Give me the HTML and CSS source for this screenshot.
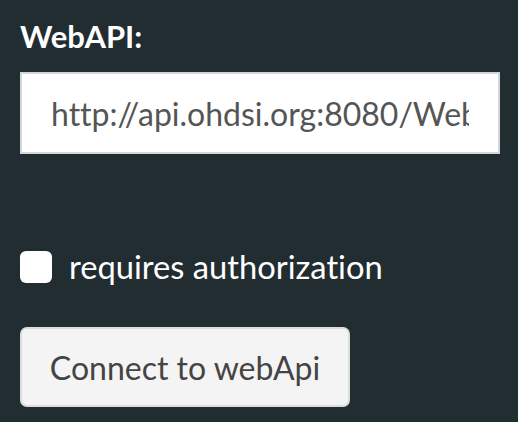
FILE: index.html
```html
<!DOCTYPE html>
<html>
<head>
<meta charset="utf-8">
<link rel="stylesheet" href="styles.css">
</head>
<body>
<div class="sidebar">
  <div class="form-group">
    <label class="control-label" for="webapi">WebAPI:</label>
    <input id="webapi" class="form-control" type="text" value="http://api.ohdsi.org:8080/WebAPI">
  </div>
  <div class="checkbox">
    <label class="check-label"><input type="checkbox" class="check"><span>requires authorization</span></label>
  </div>
  <button class="btn">Connect to webApi</button>
</div>
</body>
</html>
```
FILE: styles.css
```css
html, body {
  margin: 0;
  padding: 0;
  background: #222d32;
  height: 100%;
}
.sidebar {
  padding: 16px 18px 0 20px;
  font-family: Lato, "Open Sans", sans-serif;
  font-variant-ligatures: none;
  display: flex;
  flex-direction: column;
  align-items: flex-start;
}
.form-group {
  display: flex;
  flex-direction: column;
  width: 480px;
}
.control-label {
  color: #fff;
  font-weight: bold;
  font-size: 31px;
  line-height: 40px;
  margin-bottom: 16px;
}
.form-control {
  box-sizing: border-box;
  width: 480px;
  height: 82px;
  border: 2px solid #d2d6de;
  background: #fff;
  color: #555;
  font-family: Lato, "Open Sans", sans-serif;
  font-variant-ligatures: none;
  font-size: 32px;
  padding: 0 29px;
  margin: 0;
  outline: none;
  border-radius: 0;
}
.checkbox {
  margin-top: 93px;
}
.check-label {
  display: flex;
  align-items: center;
  gap: 17px;
  color: #fff;
  font-size: 32.7px;
  line-height: 40px;
}
.check {
  appearance: none;
  -webkit-appearance: none;
  width: 32px;
  height: 32px;
  margin: 0;
  background: #fff;
  border-radius: 6px;
  border: none;
}
.btn {
  margin-top: 40px;
  box-sizing: border-box;
  width: 330px;
  height: 80px;
  background: #f4f4f4;
  border: 2px solid #ddd;
  border-radius: 7px;
  color: #444;
  font-family: Lato, "Open Sans", sans-serif;
  font-variant-ligatures: none;
  font-size: 32px;
  padding: 0;
}
```
